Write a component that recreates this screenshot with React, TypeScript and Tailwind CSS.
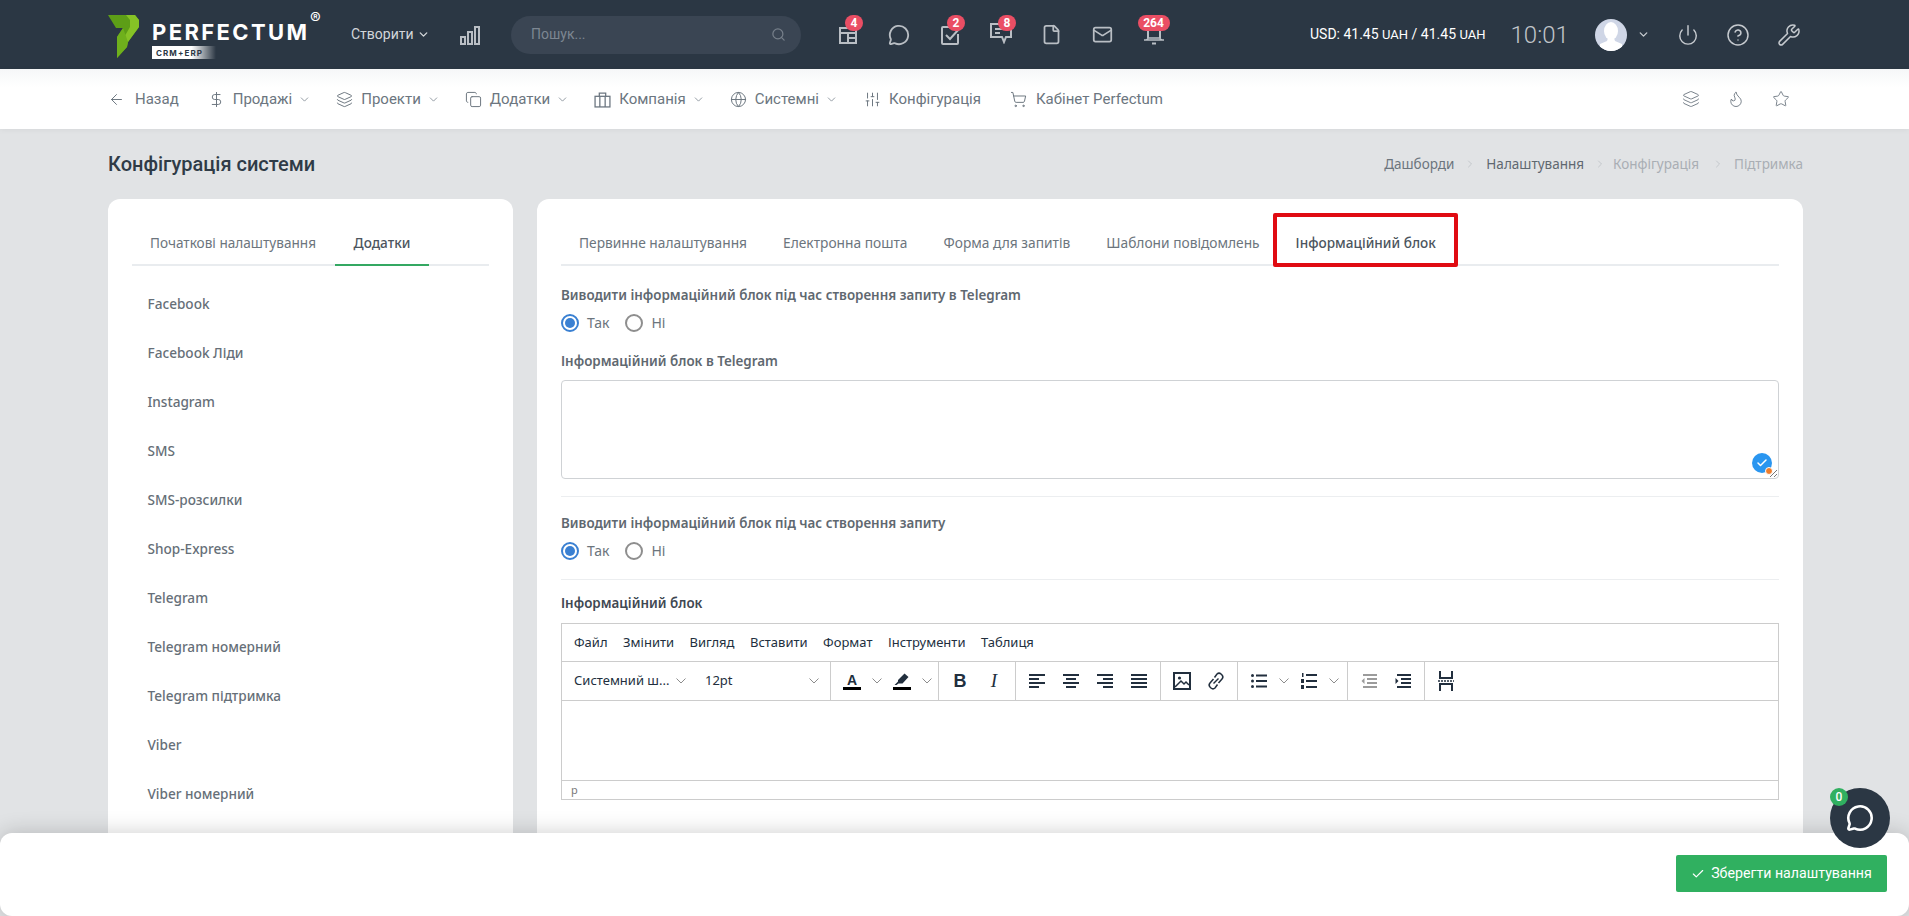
import type { ReactNode } from "react";
import {
  ArrowLeft,
  Check,
  ChevronDown,
  ChevronRight,
  CircleHelp,
  Copy,
  DollarSign,
  File,
  Flame,
  Globe,
  Layers,
  Mail,
  MessageCircle,
  Power,
  Search,
  ShoppingCart,
  SlidersVertical,
  Star,
  Wrench,
} from "lucide-react";

const plex = "font-['Noto_Sans',sans-serif]";

function Logo() {
  return (
    <div className="flex w-[222px] shrink-0 items-start">
      <svg width="31" height="43" viewBox="0 0 31 43" className="mt-[15px]">
        <polygon points="0,0 27,0 31,5 31,12 20,27 19,32 9,43 9,22 15,13 8,13" fill="#5d9e17" />
        <polygon points="18,0 27,0 31,5 31,12 20,27 15,24 22,12 22,5" fill="#86c226" />
        <polygon points="15,13 20,27 19,32 9,43 9,22" fill="#6fb01c" />
      </svg>
      <div className="relative ml-[13px] h-[69px] w-[178px]">
        <div className="absolute left-0 top-[19px] font-['Inter',sans-serif] text-[22px] font-bold leading-[26px] tracking-[2.4px] text-white">
          PERFECTUM
        </div>
        <div className="absolute left-[158px] top-[10px] font-['Inter',sans-serif] text-[16px] leading-[16px] text-white">
          ®
        </div>
        <div className="absolute left-0 top-[46px] flex h-[13px] w-[64px] items-center bg-gradient-to-r from-white from-[62%] to-transparent pl-[4px] font-['Inter',sans-serif] text-[8px] font-bold tracking-[1.1px] text-[#2b3744]">
          CRM+ERP
        </div>
      </div>
    </div>
  );
}

function BarsIcon() {
  return (
    <svg width="20" height="20" viewBox="0 0 20 20" fill="none" stroke="#b9bec4" strokeWidth="2">
      <rect x="1" y="12" width="4" height="7" />
      <rect x="8" y="7" width="4" height="12" />
      <rect x="15" y="2" width="4" height="17" />
    </svg>
  );
}

function TopIcon({ badge, children }: { badge?: string; children: ReactNode }) {
  return (
    <div className="relative flex h-[22px] w-[51px] items-center justify-center">
      {children}
      {badge && (
        <span
          className={`absolute top-[-9px] flex h-[16px] items-center justify-center rounded-full bg-[#ea4e64] font-['Roboto',sans-serif] text-[12px] font-bold leading-none text-white ${
            badge.length > 1 ? "left-[9.5px] w-[32px]" : "left-[23px] w-[18px]"
          }`}
        >
          {badge}
        </span>
      )}
    </div>
  );
}

function NavItem({ icon, label, more, gap }: { icon: ReactNode; label: string; more?: boolean; gap: string }) {
  return (
    <div className={`flex items-center ${gap} ${more ? "mr-[-4px]" : ""}`}>
      {icon}
      <span className="font-['Roboto',sans-serif] text-[15px] text-[#6c7680]">{label}</span>
      {more && <ChevronDown size={13} strokeWidth={1.5} className="ml-[-2px] text-[#7d868f]" />}
    </div>
  );
}

function Radio({ on, label }: { on?: boolean; label: string }) {
  return (
    <div className="flex items-center gap-[8px]">
      <span
        className={`flex h-[18px] w-[18px] items-center justify-center rounded-full border-2 bg-white ${
          on ? "border-[#3a80d2]" : "border-[#8e8e8e]"
        }`}
      >
        {on && <span className="h-[10px] w-[10px] rounded-full bg-[#3a80d2]" />}
      </span>
      <span className={`${plex} text-[14px] leading-[18px] text-[#6c757d]`}>{label}</span>
    </div>
  );
}

function Label({ children, dark }: { children: ReactNode; dark?: boolean }) {
  return (
    <div className={`${plex} text-[13.4px] font-semibold leading-[20px] ${dark ? "text-[#3f4852]" : "text-[#5f6870]"}`}>
      {children}
    </div>
  );
}

function Caret() {
  return (
    <svg width="10" height="6" viewBox="0 0 10 6" fill="none" stroke="#8c8c8c" strokeWidth="1">
      <path d="M0.5 0.5 5 5 9.5 0.5" />
    </svg>
  );
}

function Tool({ children }: { children: ReactNode }) {
  return <div className="flex h-full w-[34px] items-center justify-center">{children}</div>;
}

function CaretBox() {
  return (
    <div className="flex h-full w-[16px] items-center justify-center">
      <Caret />
    </div>
  );
}

function Lines({ rows, color = "#222f3e" }: { rows: [number, number][]; color?: string }) {
  return (
    <svg width="16" height="14" viewBox="0 0 16 14" fill={color}>
      {rows.map(([x, w], i) => (
        <rect key={i} x={x} y={i * 4} width={w} height="2" />
      ))}
    </svg>
  );
}

const menus = ["Файл", "Змінити", "Вигляд", "Вставити", "Формат", "Інструменти", "Таблиця"];

const addons = [
  "Facebook",
  "Facebook Ліди",
  "Instagram",
  "SMS",
  "SMS-розсилки",
  "Shop-Express",
  "Telegram",
  "Telegram номерний",
  "Telegram підтримка",
  "Viber",
  "Viber номерний",
  "WhatsApp",
];

function Editor() {
  return (
    <div className="mt-[10px] flex h-[177px] flex-col border border-[#cccccc] font-['Noto_Sans',sans-serif] text-[#222f3e]">
      <div className="flex h-[38px] shrink-0 items-center gap-[15.5px] border-b border-[#cccccc] pl-[12px] text-[13px]">
        {menus.map((m) => (
          <span key={m}>{m}</span>
        ))}
      </div>
      <div className="flex h-[39px] shrink-0 border-b border-[#cccccc]">
        <div className="flex w-[269px] items-center border-r border-[#cccccc] text-[13px]">
          <div className="flex w-[131px] items-center justify-between pl-[12px] pr-[7px]">
            <span>Системний ш...</span>
            <Caret />
          </div>
          <div className="flex w-[126px] items-center justify-between pl-[12px]">
            <span>12pt</span>
            <Caret />
          </div>
        </div>
        <div className="flex w-[108px] items-center border-r border-[#cccccc] pl-[4px]">
          <Tool>
            <div className="flex flex-col items-center">
              <span className="font-['Liberation_Sans',sans-serif] text-[14px] font-bold leading-[14px]">A</span>
              <span className="h-[3px] w-[18px] bg-black" />
            </div>
          </Tool>
          <CaretBox />
          <Tool>
            <svg width="18" height="18" viewBox="0 0 18 18">
              <path d="M11.5 1.5 15.5 5 9.5 11.5H5.5L3.5 13H1.5L5 9.5 5 8Z" fill="#222f3e" />
              <rect x="0" y="15" width="18" height="3" fill="#000" />
            </svg>
          </Tool>
          <CaretBox />
        </div>
        <div className="flex w-[77px] items-center border-r border-[#cccccc] pl-[4px]">
          <Tool>
            <span className="font-['Liberation_Sans',sans-serif] text-[18px] font-bold">B</span>
          </Tool>
          <Tool>
            <span className="font-['Liberation_Serif',serif] text-[19px] italic">I</span>
          </Tool>
        </div>
        <div className="flex w-[145px] items-center border-r border-[#cccccc] pl-[4px]">
          <Tool>
            <Lines rows={[[0, 16], [0, 10], [0, 16], [0, 10]]} />
          </Tool>
          <Tool>
            <Lines rows={[[0, 16], [3, 10], [0, 16], [3, 10]]} />
          </Tool>
          <Tool>
            <Lines rows={[[0, 16], [6, 10], [0, 16], [6, 10]]} />
          </Tool>
          <Tool>
            <Lines rows={[[0, 16], [0, 16], [0, 16], [0, 16]]} />
          </Tool>
        </div>
        <div className="flex w-[77px] items-center border-r border-[#cccccc] pl-[4px]">
          <Tool>
            <svg width="18" height="18" viewBox="0 0 18 18" fill="none" stroke="#222f3e">
              <rect x="1" y="1" width="16" height="16" strokeWidth="2" />
              <circle cx="6.5" cy="6" r="1.6" fill="#222f3e" stroke="none" />
              <path d="M2 15 8 9l3 3 2-2 3 3" strokeWidth="1.5" />
            </svg>
          </Tool>
          <Tool>
            <svg width="20" height="20" viewBox="0 0 20 20" fill="none" stroke="#222f3e" strokeWidth="1.5">
              <path d="M8.5 6.5 11 3a3 3 0 0 1 4 0l1 1a3 3 0 0 1 0 4l-3.5 4" />
              <path d="M11.5 13.5 9 17a3 3 0 0 1-4 0l-1-1a3 3 0 0 1 0-4l3.5-4" />
              <path d="M7.5 12.5 12.5 7.5" />
            </svg>
          </Tool>
        </div>
        <div className="flex w-[110px] items-center border-r border-[#cccccc] pl-[4px]">
          <Tool>
            <svg width="16" height="14" viewBox="0 0 16 14" fill="#222f3e">
              <circle cx="1.5" cy="1.5" r="1.5" />
              <circle cx="1.5" cy="7" r="1.5" />
              <circle cx="1.5" cy="12.5" r="1.5" />
              <rect x="5" y="0.5" width="11" height="2" />
              <rect x="5" y="6" width="11" height="2" />
              <rect x="5" y="11.5" width="11" height="2" />
            </svg>
          </Tool>
          <CaretBox />
          <Tool>
            <svg width="16" height="16" viewBox="0 0 16 16" fill="#222f3e">
              <rect x="1" y="0" width="1.5" height="4" />
              <rect x="0" y="6" width="3" height="4" />
              <rect x="0" y="12" width="3" height="4" />
              <rect x="5" y="1" width="11" height="2" />
              <rect x="5" y="7" width="11" height="2" />
              <rect x="5" y="13" width="11" height="2" />
            </svg>
          </Tool>
          <CaretBox />
        </div>
        <div className="flex w-[77px] items-center border-r border-[#cccccc] pl-[4px]">
          <Tool>
            <svg width="16" height="14" viewBox="0 0 16 14" fill="#9b9b9b">
              <rect x="2" y="0" width="14" height="2" />
              <rect x="6" y="4" width="10" height="2" />
              <rect x="6" y="8" width="10" height="2" />
              <rect x="2" y="12" width="14" height="2" />
              <path d="M3.5 4 0.5 7l3 3z" />
            </svg>
          </Tool>
          <Tool>
            <svg width="16" height="14" viewBox="0 0 16 14" fill="#222f3e">
              <rect x="2" y="0" width="14" height="2" />
              <rect x="6" y="4" width="10" height="2" />
              <rect x="6" y="8" width="10" height="2" />
              <rect x="2" y="12" width="14" height="2" />
              <path d="M0.5 4 3.5 7l-3 3z" />
            </svg>
          </Tool>
        </div>
        <div className="flex items-center pl-[4px]">
          <Tool>
            <svg width="16" height="20" viewBox="0 0 16 20" fill="none" stroke="#222f3e" strokeWidth="2">
              <path d="M2 0v7h12V0" />
              <path d="M2 20v-7h12v7" />
              <path d="M0 10h16" strokeDasharray="2 1" strokeWidth="1.5" />
            </svg>
          </Tool>
        </div>
      </div>
      <div className="flex-1" />
      <div className="flex h-[19px] shrink-0 items-center border-t border-[#cccccc] pl-[9px] text-[11px] text-[#7a7a7a]">
        p
      </div>
    </div>
  );
}

export default function App() {
  return (
    <div className="relative h-[916px] overflow-hidden bg-[#e1e3e5]">
      <header className="flex h-[69px] items-center bg-[#2b3744] pl-[108px]">
        <Logo />
        <div className="ml-[21px] flex w-[88px] items-center gap-[3px] font-['Roboto',sans-serif] text-[14px] text-[#d3d6da]">
          Створити
          <ChevronDown size={13} strokeWidth={2.5} />
        </div>
        <div className="ml-[21px]">
          <BarsIcon />
        </div>
        <div className="ml-[31px] flex h-[38px] w-[290px] items-center justify-between rounded-full bg-[#3a4553] pl-[20px] pr-[15px] font-['Roboto',sans-serif] text-[14px] text-[#7d8792]">
          Пошук...
          <Search size={15} strokeWidth={2} className="text-[#767f8a]" />
        </div>
        <div className="ml-[21px] flex text-[#b9bec4]">
          <TopIcon badge="4">
            <svg width="20" height="20" viewBox="0 0 20 20" fill="none" stroke="currentColor" strokeWidth="2">
              <path d="M2 3h16v15H2z" />
              <path d="M2 8h16M10 8v10M10 13h8" />
            </svg>
          </TopIcon>
          <TopIcon>
            <MessageCircle size={22} strokeWidth={2} />
          </TopIcon>
          <TopIcon badge="2">
            <svg width="20" height="20" viewBox="0 0 20 20" fill="none" stroke="currentColor" strokeWidth="2">
              <path d="M11 2H3a1 1 0 0 0-1 1v15a1 1 0 0 0 1 1h14a1 1 0 0 0 1-1V9" />
              <path d="m6 10 4 4 9-10" />
            </svg>
          </TopIcon>
          <TopIcon badge="8">
            <svg width="22" height="22" viewBox="0 0 22 22" fill="none" stroke="currentColor" strokeWidth="2" className="mt-[-4px]">
              <path d="M1 2h20v13h-5l-2 5-2-5H1z" />
              <path d="M5 7h9M5 11h5" />
            </svg>
          </TopIcon>
          <TopIcon>
            <File size={21} strokeWidth={2} />
          </TopIcon>
          <TopIcon>
            <Mail size={21} strokeWidth={2} />
          </TopIcon>
          <TopIcon badge="264">
            <svg width="22" height="22" viewBox="0 0 22 22" fill="none" stroke="currentColor" strokeWidth="2">
              <path d="M5 2v12M17 2v12" />
              <path d="M1 16c3 0 4-1 4-2h12c0 1 1 2 4 2z" strokeWidth="1.5" />
              <path d="M9 19.5h4" />
            </svg>
          </TopIcon>
        </div>
        <div className="ml-[131px] font-['Roboto',sans-serif] text-[14px] text-white">
          USD: 41.45 <span className="text-[13px]">UAH</span> / 41.45 <span className="text-[13px]">UAH</span>
        </div>
        <div className="ml-[25px] font-['Roboto',sans-serif] text-[24px] font-light text-[#c1c5ca]">10:01</div>
        <div className="ml-[26px] h-[32px] w-[32px] overflow-hidden rounded-full bg-[#cfd6e6]">
          <svg width="32" height="32" viewBox="0 0 32 32" fill="#fff">
            <ellipse cx="16" cy="12" rx="7" ry="9" />
            <path d="M13 19h6l1 3 7 3v7H5v-7l7-3z" />
          </svg>
        </div>
        <ChevronDown size={13} strokeWidth={2.5} className="ml-[10px] text-[#c6cacf]" />
        <Power size={22} strokeWidth={1.6} className="ml-[27px] text-[#c6cacf]" />
        <CircleHelp size={24} strokeWidth={1.5} className="ml-[27px] text-[#c6cacf]" />
        <Wrench size={24} strokeWidth={1.5} className="ml-[27px] text-[#c6cacf]" />
      </header>

      <nav className="flex h-[60px] items-center bg-gradient-to-b from-[#f6f7f8] to-white to-[30%] pl-[108px] pr-[119px] shadow-[0_1px_6px_rgba(0,0,0,0.05)]">
        <div className="flex items-center gap-[29px]">
          <NavItem gap="gap-[10px]" label="Назад" icon={<ArrowLeft size={17} strokeWidth={1.4} className="text-[#6c7680]" />} />
          <NavItem gap="gap-[8px]" label="Продажі" more icon={<DollarSign size={17} strokeWidth={1.4} className="text-[#6c7680]" />} />
          <NavItem gap="gap-[8px]" label="Проекти" more icon={<Layers size={17} strokeWidth={1.4} className="text-[#6c7680]" />} />
          <NavItem gap="gap-[8px]" label="Додатки" more icon={<Copy size={17} strokeWidth={1.4} className="text-[#6c7680]" />} />
          <NavItem
            gap="gap-[8px]"
            label="Компанія"
            more
            icon={
              <svg width="17" height="17" viewBox="0 0 16 16" fill="none" stroke="#6c7680" strokeWidth="1.2">
                <rect x="1" y="5" width="14" height="10" />
                <path d="M5 5V2h6v3M5.5 5v10M10.5 5v10" />
              </svg>
            }
          />
          <NavItem gap="gap-[8px]" label="Системні" more icon={<Globe size={17} strokeWidth={1.4} className="text-[#6c7680]" />} />
          <NavItem gap="gap-[8px] ml-[1px]" label="Конфігурація" icon={<SlidersVertical size={17} strokeWidth={1.4} className="text-[#6c7680]" />} />
          <NavItem gap="gap-[9px]" label="Кабінет Perfectum" icon={<ShoppingCart size={17} strokeWidth={1.4} className="text-[#6c7680]" />} />
        </div>
        <div className="ml-auto flex items-center gap-[27px] text-[#6c7680]">
          <Layers size={18} strokeWidth={1.2} />
          <Flame size={18} strokeWidth={1.2} />
          <Star size={18} strokeWidth={1.2} />
        </div>
      </nav>

      <div className="flex h-[70px] items-center justify-between pl-[108px] pr-[106px]">
        <h1 className="font-['Roboto',sans-serif] text-[20px] font-medium text-[#2f3b47]">Конфігурація системи</h1>
        <div className={`${plex} flex items-center gap-[10px] text-[13.5px] text-[#a9aeb4]`}>
          <span className="text-[#6c757d]">Дашборди</span>
          <ChevronRight size={12} className="text-[#c4c8cc]" />
          <span className="text-[#5f6870]">Налаштування</span>
          <ChevronRight size={12} className="text-[#c4c8cc]" />
          <span className="ml-[-3px] mr-[3px]">Конфігурація</span>
          <ChevronRight size={12} className="text-[#c4c8cc]" />
          <span>Підтримка</span>
        </div>
      </div>

      <main className="flex gap-[24px] pl-[108px] pr-[106px]">
        <aside className="h-[760px] w-[405px] shrink-0 rounded-[12px] bg-white px-[24px] pt-[24px]">
          <div className={`${plex} flex h-[43px] items-center border-b-2 border-[#e9ecef] text-[13.6px]`}>
            <div className="pl-[18px] pr-[19px] text-[#6c757d]">Початкові налаштування</div>
            <div className="relative flex h-full w-[94px] items-center justify-center font-medium text-[#4c555e]">
              Додатки
              <span className="absolute bottom-[-2px] left-0 h-[2px] w-full bg-[#34a862]" />
            </div>
          </div>
          <ul className={`${plex} mt-[13.5px] text-[13.6px] font-medium text-[#666f78]`}>
            {addons.map((a) => (
              <li key={a} className="flex h-[49px] items-center pl-[15.5px]">
                {a}
              </li>
            ))}
          </ul>
        </aside>

        <section className="h-[760px] flex-1 rounded-[12px] bg-white px-[24px] pt-[24px]">
          <div className={`${plex} flex h-[43px] items-center border-b-2 border-[#e9ecef] text-[13.75px] text-[#6c757d]`}>
            <div className="px-[18px]">Первинне налаштування</div>
            <div className="px-[18px]">Електронна пошта</div>
            <div className="px-[18px]">Форма для запитів</div>
            <div className="px-[18px]">Шаблони повідомлень</div>
            <div className="relative px-[18px] text-[13.6px] font-medium text-[#4c555e]">
              Інформаційний блок
              <span className="absolute bottom-[-13px] left-[-5px] right-[-4px] top-[-20px] rounded-[2px] border-[4px] border-[#e00b12]" />
            </div>
          </div>

          <div className="mt-[19px]">
            <Label>Виводити інформаційний блок під час створення запиту в Telegram</Label>
          </div>
          <div className="mt-[9px] flex gap-[16px]">
            <Radio on label="Так" />
            <Radio label="Ні" />
          </div>
          <div className="mt-[19px]">
            <Label>Інформаційний блок в Telegram</Label>
          </div>
          <div className="relative mt-[9px] h-[99px] rounded-[4px] border border-[#cfd2d5] bg-white">
            <div className="absolute bottom-[5px] right-[6px] flex h-[20px] w-[20px] items-center justify-center rounded-full bg-[#2a96f0]">
              <Check size={12} strokeWidth={3} className="text-white" />
              <span className="absolute bottom-[-2px] right-[-1px] h-[8px] w-[8px] rounded-full border border-white bg-[#ef7d2c]" />
            </div>
            <svg width="10" height="10" viewBox="0 0 10 10" stroke="#777" className="absolute bottom-0 right-0">
              <path d="M9 2 2 9M9 6 6 9" />
            </svg>
          </div>
          <div className="mt-[17px] h-px bg-[#eceef0]" />
          <div className="mt-[16px]">
            <Label>Виводити інформаційний блок під час створення запиту</Label>
          </div>
          <div className="mt-[9px] flex gap-[16px]">
            <Radio on label="Так" />
            <Radio label="Ні" />
          </div>
          <div className="mt-[19px] h-px bg-[#eceef0]" />
          <div className="mt-[13px]">
            <Label dark>Інформаційний блок</Label>
          </div>
          <Editor />
        </section>
      </main>

      <footer className="absolute bottom-0 left-0 right-0 flex h-[83px] items-center justify-end rounded-[12px] bg-white pb-[2px] pr-[22px] shadow-[0_0_22px_rgba(0,0,0,0.2)]">
        <button className="flex h-[37px] w-[211px] items-center justify-center gap-[6px] rounded-[2px] bg-[#30b060] font-['Roboto',sans-serif] text-[14.2px] text-white">
          <Check size={14} strokeWidth={2} />
          Зберегти налаштування
        </button>
      </footer>

      <div className="absolute left-[1830px] top-[788px] flex h-[60px] w-[60px] items-center justify-center rounded-full bg-[#2b3744]">
        <MessageCircle size={28} strokeWidth={2.2} className="text-white" />
        <span className="absolute left-0 top-0 flex h-[18px] w-[18px] items-center justify-center rounded-full bg-[#30b060] font-['Roboto',sans-serif] text-[12px] font-medium text-white">
          0
        </span>
      </div>
    </div>
  );
}
